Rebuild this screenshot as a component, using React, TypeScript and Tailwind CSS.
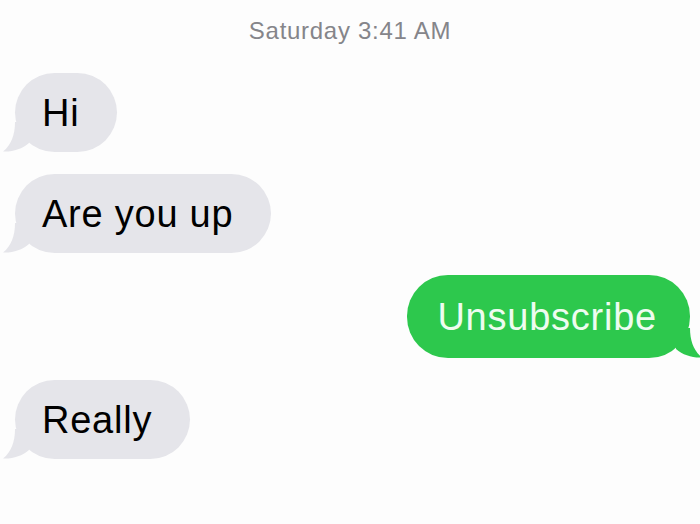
import React from "react"

const Tail = ({ side, color }: { side: "left" | "right"; color: string }) => (
  <svg
    width="30"
    height="30"
    viewBox="0 0 30 30"
    className={side === "left" ? "absolute -left-[13px] bottom-0" : "absolute -right-[13px] bottom-0 -scale-x-100"}
  >
    <path d="M13 0 C13 13 9 23 1 29.5 C11 30 20 27 27 21 L27 0 Z" fill={color} />
  </svg>
)

const Bubble = ({ text, mine }: { text: string; mine?: boolean }) => (
  <div className={mine ? "flex justify-end" : "flex justify-start"}>
    <div
      className={
        mine
          ? "relative h-[83px] flex items-center pl-[30px] pr-[33px] rounded-[41px] bg-[#2dc84d] text-[#eefcf0]"
          : "relative h-[79px] flex items-center pl-[27px] pr-[38px] rounded-[40px] bg-[#e5e5ea] text-black"
      }
    >
      <Tail side={mine ? "right" : "left"} color={mine ? "#2dc84d" : "#e5e5ea"} />
      <span className="relative text-[38px] tracking-[0.02em] leading-none">{text}</span>
    </div>
  </div>
)

export default function App() {
  return (
    <main className="w-[700px] h-[524px] bg-[#fdfdfd] overflow-hidden font-['Liberation_Sans',Arial,sans-serif]">
      <div className="pt-[19px] text-center text-[24px] leading-[24px] tracking-[0.03em] text-[#85858a]">
        Saturday 3:41 AM
      </div>
      <div className="flex flex-col gap-[22px] pl-[15px] pr-[10px] pt-[30px]">
        <Bubble text="Hi" />
        <Bubble text="Are you up" />
        <Bubble text="Unsubscribe" mine />
        <Bubble text="Really" />
      </div>
    </main>
  )
}
